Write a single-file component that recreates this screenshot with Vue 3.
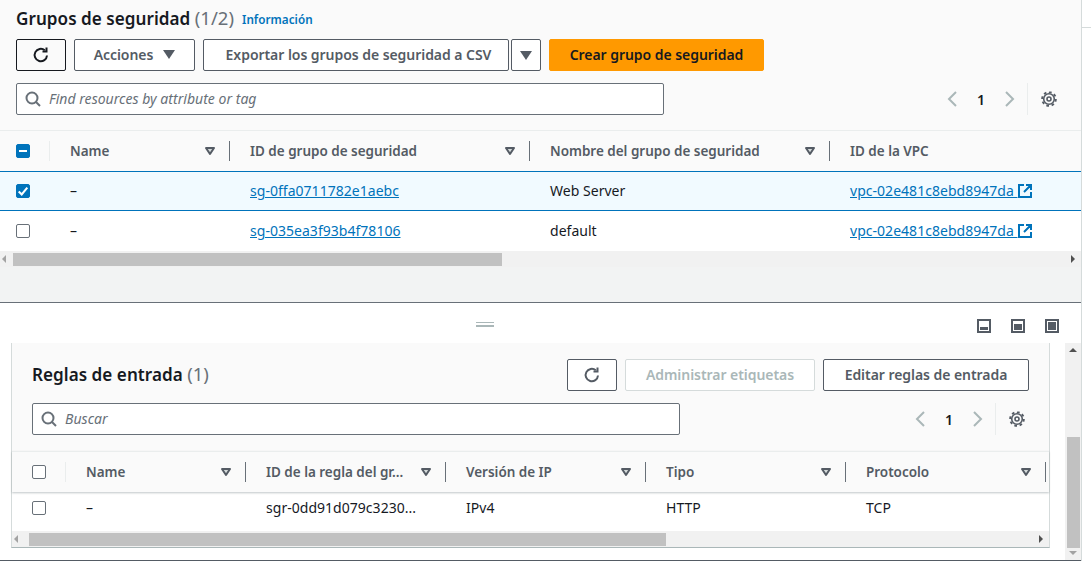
<script setup>
const columnsTop = ['Name', 'ID de grupo de seguridad', 'Nombre del grupo de seguridad', 'ID de la VPC']
const rowsTop = [
  { id: 'sg-0ffa0711782e1aebc', name: 'Web Server', vpc: 'vpc-02e481c8ebd8947da', selected: true },
  { id: 'sg-035ea3f93b4f78106', name: 'default', vpc: 'vpc-02e481c8ebd8947da', selected: false },
]
const columnsBottom = ['Name', 'ID de la regla del gr...', 'Versión de IP', 'Tipo', 'Protocolo']
const cellsBottom = ['–', 'sgr-0dd91d079c3230...', 'IPv4', 'HTTP', 'TCP']
</script>

<template>
  <div class="page">
    <span class="edge-line"></span>
    <section class="top-pane">
      <div class="heading">
        <h1>Grupos de seguridad <span class="count">(1/2)</span></h1>
        <a class="info">Información</a>
      </div>
      <div class="actions">
        <button class="btn icon-btn dark">
          <svg width="18" height="18" viewBox="0 0 18 18"><path d="M15 9.500A6.200 6.200 0 1 1 12.800 4.300" class="stroke" /><path d="M14.500 1.500v4h-4" class="stroke" /></svg>
        </button>
        <button class="btn acciones">Acciones <i class="caret big"></i></button>
        <button class="btn exportar">Exportar los grupos de seguridad a CSV</button>
        <button class="btn caret-btn"><i class="caret big"></i></button>
        <button class="btn primary">Crear grupo de seguridad</button>
      </div>
      <div class="filter-row">
        <div class="search">
          <svg width="16" height="16" viewBox="0 0 16 16"><circle cx="7" cy="7" r="5.500" class="stroke soft" /><path d="M11 11l4 4" class="stroke soft" /></svg>
          <span>Find resources by attribute or tag</span>
        </div>
        <div class="pager pager-top">
          <svg width="16" height="16" viewBox="0 0 16 16"><path d="M11 1L4 8l7 7" class="stroke light" /></svg>
          <b>1</b>
          <svg width="16" height="16" viewBox="0 0 16 16"><path d="M5 1l7 7-7 7" class="stroke light" /></svg>
          <span class="pager-div"></span>
          <svg width="16" height="16" viewBox="0 0 16 16">
            <circle cx="8" cy="8" r="5.300" class="gear" />
            <circle cx="8" cy="8" r="6.900" class="gear-teeth" pathLength="24" />
            <circle cx="8" cy="8" r="2" class="gear" />
          </svg>
        </div>
      </div>
    </section>

    <section class="table-top">
      <div class="grid-top head">
        <div class="check-cell"><span class="check on"><i class="minus"></i></span></div>
        <div v-for="(col, i) in columnsTop" :key="col" class="th">
          <span>{{ col }}</span>
          <svg v-if="i < 3" width="12" height="10" viewBox="0 0 12 10"><path d="M2 2h8L6 8z" class="sort" /></svg>
        </div>
      </div>
      <div v-for="row in rowsTop" :key="row.id" class="grid-top row" :class="{ selected: row.selected }">
        <div class="check-cell">
          <span class="check" :class="{ on: row.selected }">
            <svg v-if="row.selected" width="12" height="12" viewBox="0 0 14 14"><path d="M2 7.500l3.500 3.500 6.500-8" fill="none" stroke="#fff" stroke-width="2.400" /></svg>
          </span>
        </div>
        <div class="td">–</div>
        <div class="td"><a class="link">{{ row.id }}</a></div>
        <div class="td">{{ row.name }}</div>
        <div class="td">
          <a class="link">{{ row.vpc }}&nbsp;</a>
          <svg class="ext" width="16" height="16" viewBox="0 0 16 16"><path d="M7 2H2v12h12V9M9 2h5v5M14 2L7 9" fill="none" stroke="#0073bb" stroke-width="2" /></svg>
        </div>
      </div>
      <div class="hscroll">
        <i class="arrow-left"></i>
        <span class="thumb thumb-top"></span>
        <i class="arrow-right"></i>
      </div>
    </section>

    <div class="gap-band"></div>

    <section class="split">
      <div class="split-bar">
        <span class="grip"></span>
        <div class="split-icons">
          <span class="pane-icon low"></span>
          <span class="pane-icon mid"></span>
          <span class="pane-icon high"></span>
        </div>
      </div>

      <div class="detail-wrap">
        <div class="card">
          <div class="card-head">
            <h2>Reglas de entrada <span class="count">(1)</span></h2>
            <div class="card-actions">
              <button class="btn icon-btn">
                <svg width="18" height="18" viewBox="0 0 18 18"><path d="M15 9.500A6.200 6.200 0 1 1 12.800 4.300" class="stroke" /><path d="M14.500 1.500v4h-4" class="stroke" /></svg>
              </button>
              <button class="btn disabled">Administrar etiquetas</button>
              <button class="btn editar">Editar reglas de entrada</button>
            </div>
          </div>
          <div class="filter-row inner">
            <div class="search">
              <svg width="16" height="16" viewBox="0 0 16 16"><circle cx="7" cy="7" r="5.500" class="stroke soft" /><path d="M11 11l4 4" class="stroke soft" /></svg>
              <span>Buscar</span>
            </div>
            <div class="pager pager-inner">
              <svg width="16" height="16" viewBox="0 0 16 16"><path d="M11 1L4 8l7 7" class="stroke light" /></svg>
              <b>1</b>
              <svg width="16" height="16" viewBox="0 0 16 16"><path d="M5 1l7 7-7 7" class="stroke light" /></svg>
              <span class="pager-div"></span>
              <svg width="16" height="16" viewBox="0 0 16 16">
                <circle cx="8" cy="8" r="5.300" class="gear" />
                <circle cx="8" cy="8" r="6.900" class="gear-teeth" pathLength="24" />
                <circle cx="8" cy="8" r="2" class="gear" />
              </svg>
            </div>
          </div>
          <div class="grid-bottom head">
            <div class="check-cell"><span class="check"></span></div>
            <div v-for="col in columnsBottom" :key="col" class="th">
              <span>{{ col }}</span>
              <svg width="12" height="10" viewBox="0 0 12 10"><path d="M2 2h8L6 8z" class="sort" /></svg>
            </div>
          </div>
          <div class="grid-bottom row">
            <div class="check-cell"><span class="check"></span></div>
            <div v-for="cell in cellsBottom" :key="cell" class="td">{{ cell }}</div>
          </div>
          <div class="hscroll">
            <i class="arrow-left"></i>
            <span class="thumb thumb-bottom"></span>
            <i class="arrow-right"></i>
          </div>
        </div>
        <div class="vscroll">
          <i class="arrow-up"></i>
          <span class="vthumb"></span>
          <i class="arrow-down"></i>
        </div>
      </div>
      <div class="bottom-line"></div>
    </section>
  </div>
</template>

<style>
html, body { margin: 0; background: #fff; }
</style>

<style scoped>
.page {
  position: relative;
  width: 1081px;
  height: 561px;
  display: flex;
  flex-direction: column;
  border-right: 1px solid #d5dbdb;
  font-family: "Noto Sans", "Open Sans", sans-serif;
  font-size: 14px;
  color: #16191f;
  letter-spacing: 0.03px;
}
.edge-line { position: absolute; left: 1082px; top: 27px; width: 9px; height: 1px; background: #d5dbdb; }
h1, h2 { margin: 0; font-weight: 600; }
a { cursor: pointer; }
.stroke { fill: none; stroke: #545b64; stroke-width: 2; }
.stroke.light { stroke: #aab7b8; }
.stroke.soft { stroke: #687078; }
.gear { fill: none; stroke: #545b64; stroke-width: 1.600; }
.gear-teeth { fill: none; stroke: #545b64; stroke-width: 1.800; stroke-dasharray: 1.500 1.500; }
.sort { fill: #d5dbdb; stroke: #545b64; stroke-width: 2; stroke-linejoin: round; }

.top-pane {
  height: 131px;
  box-sizing: border-box;
  background: #fafafa;
  border-bottom: 1px solid #eaeded;
  padding: 6px 16px 0;
}
.heading { display: flex; align-items: center; gap: 8px; height: 25px; }
h1 { font-size: 17.100px; line-height: 24px; }
.count { font-weight: 400; font-size: 18.500px; color: #687078; }
.info { font-size: 11.700px; font-weight: 600; color: #0073bb; padding-top: 1px; }

.actions { display: flex; margin-top: 8px; gap: 8px; }
.btn {
  height: 32px;
  box-sizing: border-box;
  border: 1px solid #545b64;
  border-radius: 2px;
  background: #fff;
  color: #545b64;
  font: 600 14px "Noto Sans", "Open Sans", sans-serif;
  letter-spacing: -0.05px;
  padding: 0 0 2px;
  display: flex;
  align-items: center;
  justify-content: center;
}
.icon-btn { width: 50px; padding: 0; }
.icon-btn.dark { border-color: #16191f; background: #fafafa; }
.icon-btn.dark .stroke { stroke: #16191f; }
.acciones { width: 121px; gap: 10px; }
.exportar { width: 306px; padding-left: 5px; }
.caret-btn { width: 30px; margin-left: -6px; padding: 0; }
.primary { width: 215px; background: #ff9900; border-color: #ff9900; color: #16191f; }
.disabled { width: 190px; border-color: #d5dbdb; color: #aab7b8; background: #fff; }
.editar { width: 206px; }
.caret { display: block; width: 0; height: 0; border-style: solid; border-color: #545b64 transparent transparent; }
.caret.big { border-width: 9px 6.500px 0; }

.filter-row { display: flex; justify-content: space-between; margin-top: 12px; }
.search {
  width: 648px;
  height: 32px;
  box-sizing: border-box;
  border: 1px solid #687078;
  border-radius: 2px;
  background: #fff;
  display: flex;
  align-items: center;
  gap: 8px;
  padding: 0 0 1px 8px;
  font-style: italic;
  color: #687078;
}
.pager { display: flex; align-items: center; height: 32px; }
.pager-top { margin-right: 8px; }
.pager-inner { margin-right: 4px; }
.pager b { width: 40px; text-align: center; font-weight: 600; font-size: 14px; }
.pager-div { width: 1px; height: 32px; background: #eaeded; margin: 0 13px 0 10px; }

.grid-top, .grid-bottom { display: grid; }
.grid-top { grid-template-columns: 50px 180px 300px 300px 251px; }
.grid-bottom { grid-template-columns: 54px 180px 200px 200px 200px 200px; width: 1037px; }
.head { height: 40px; background: #fafafa; align-items: center; }
.th {
  display: flex;
  align-items: center;
  justify-content: space-between;
  height: 20px;
  padding: 0 13px 0 20px;
  border-right: 1px solid #687078;
  font-weight: 600;
  font-size: 13.500px;
  letter-spacing: -0.02px;
  color: #545b64;
  line-height: 18px;
}
.th span { padding-bottom: 1px; }
.grid-top .th:last-child { border-right: 0; }
.check-cell { display: flex; align-items: center; height: 20px; padding-left: 16px; border-right: 1px solid #eaeded; box-sizing: border-box; }
.grid-bottom .check-cell { padding-left: 20px; }
.row .check-cell { border-right: 0; }
.check {
  width: 14px;
  height: 14px;
  box-sizing: border-box;
  border: 1px solid #687078;
  border-radius: 2px;
  background: #fff;
  display: flex;
  align-items: center;
  justify-content: center;
}
.check.on { background: #0073bb; border-color: #0073bb; }
.minus { width: 8px; height: 2px; background: #fff; }
.row { align-items: center; background: #fff; }
.table-top .row { height: 40px; }
.table-top .td { padding-bottom: 1px; }
.table-top .selected {
  height: 40px;
  box-sizing: border-box;
  background: #f1faff;
  border-top: 1px solid #0073bb;
  border-bottom: 1px solid #0073bb;
}
.td { padding-left: 20px; display: flex; align-items: center; white-space: nowrap; }
.link { color: #0073bb; text-decoration: underline; }
.ext { margin-left: -1px; }

.hscroll {
  height: 16px;
  background: #f1f1f1;
  display: flex;
  align-items: center;
}
.thumb { height: 13px; background: #c1c1c1; display: block; }
.thumb-top { width: 489px; margin-left: 7px; margin-right: auto; }
.thumb-bottom { width: 637px; margin-left: 11px; margin-right: auto; }
.arrow-left, .arrow-right, .arrow-up, .arrow-down { display: block; width: 0; height: 0; border-style: solid; }
.arrow-left { border-width: 4px 4px 4px 0; border-color: transparent #a3a3a3 transparent transparent; margin-left: 2px; }
.arrow-right { border-width: 4px 0 4px 4px; border-color: transparent transparent transparent #505050; margin-right: 6px; }
.arrow-up { border-width: 0 4px 4px; border-color: transparent transparent #505050; margin-top: 5px; }
.arrow-down { border-width: 4px 4px 0; border-color: #a3a3a3 transparent transparent; margin-bottom: 5px; }

.gap-band { height: 35px; background: #f2f3f3; border-bottom: 1px solid #687078; }

.split { flex: 1; display: flex; flex-direction: column; background: #fff; }
.split-bar { height: 40px; position: relative; display: flex; justify-content: flex-end; align-items: center; flex: none; }
.grip { position: absolute; left: 476px; top: 19px; width: 18px; height: 2px; border-top: 1px solid #aab7b8; border-bottom: 2px solid #aab7b8; box-sizing: content-box; }
.split-icons { display: flex; gap: 20px; padding-right: 22px; margin-top: 6px; }
.pane-icon { width: 14px; height: 14px; border: 2px solid #545b64; position: relative; display: block; background: #fff; box-sizing: border-box; }
.pane-icon::after { content: ""; position: absolute; left: 1px; right: 1px; bottom: 1px; background: #545b64; }
.low::after { height: 3px; }
.mid::after { height: 6px; }
.high::after { height: 8px; }

.detail-wrap { display: flex; padding-left: 11px; height: 205px; flex: none; }
.card {
  width: 1039px;
  height: 205px;
  box-sizing: border-box;
  background: #fafafa;
  border-left: 1px solid #d5dbdb;
  border-right: 1px solid #d5dbdb;
  border-bottom: 1px solid #aab7b8;
  flex: none;
}
.card-head { display: flex; justify-content: space-between; align-items: center; padding: 16px 20px 0; }
h2 { font-size: 17.100px; padding-bottom: 2px; line-height: 24px; }
.card-actions { display: flex; gap: 8px; }
.inner { margin: 12px 0 0; padding: 0 20px; }
.grid-bottom.head { margin-top: 16px; border-top: 1px solid #eaeded; box-shadow: 0 1px 2px rgba(0, 28, 36, 0.25); position: relative; }
.grid-bottom.row { height: 39px; padding-bottom: 8px; box-sizing: border-box; }
.vscroll {
  width: 16px;
  margin-left: 15px;
  background: #f1f1f1;
  display: flex;
  flex-direction: column;
  align-items: center;
  justify-content: space-between;
  height: 217px;
}
.vthumb { width: 13px; height: 111px; background: #c1c1c1; margin-top: auto; margin-bottom: 3px; }
.bottom-line { height: 1px; margin-top: 12px; background: #545b64; }
</style>
